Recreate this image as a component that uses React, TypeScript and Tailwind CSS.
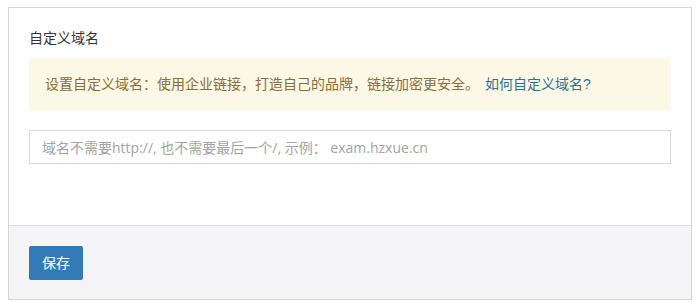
import React from 'react'

const App = () => {
  return (
    <div
      className="w-[700px] h-[302px] bg-white pt-[7px] px-[8px] pb-[2px]"
      style={{ fontFamily: '"Liberation Sans", "Noto Sans CJK SC", sans-serif' }}
    >
      <div className="flex flex-col h-full border border-[#d6d6d6]">
        <div className="flex flex-col px-[20px] pt-[21px] h-[217px] bg-white">
          <h3 className="text-[14px] leading-[18px] text-[#333]">自定义域名</h3>
          <div className="mt-[11px] h-[52px] bg-[#fcf8e6] px-[16px] flex items-center text-[14px] text-[#8a6d3b]">
            设置自定义域名：使用企业链接，打造自己的品牌，链接加密更安全。
            <a href="#" className="ml-[6px] text-[#31708f]">如何自定义域名?</a>
          </div>
          <input
            type="text"
            placeholder="域名不需要http://, 也不需要最后一个/, 示例： exam.hzxue.cn"
            className="mt-[20px] h-[34px] w-full border border-[#d9d9d9] px-[12px] text-[14px] text-[#555] placeholder:text-[#a3a3a3] outline-none"
            style={{ fontFamily: '"Open Sans", "Noto Sans CJK SC", sans-serif' }}
          />
        </div>
        <div className="flex-1 border-t border-[#dcdcdc] bg-[#f5f5f7] px-[20px] pt-[20px]">
          <button className="h-[34px] w-[54px] rounded-[2px] bg-[#337ab7] text-[14px] text-white">
            保存
          </button>
        </div>
      </div>
    </div>
  )
}

export default App
